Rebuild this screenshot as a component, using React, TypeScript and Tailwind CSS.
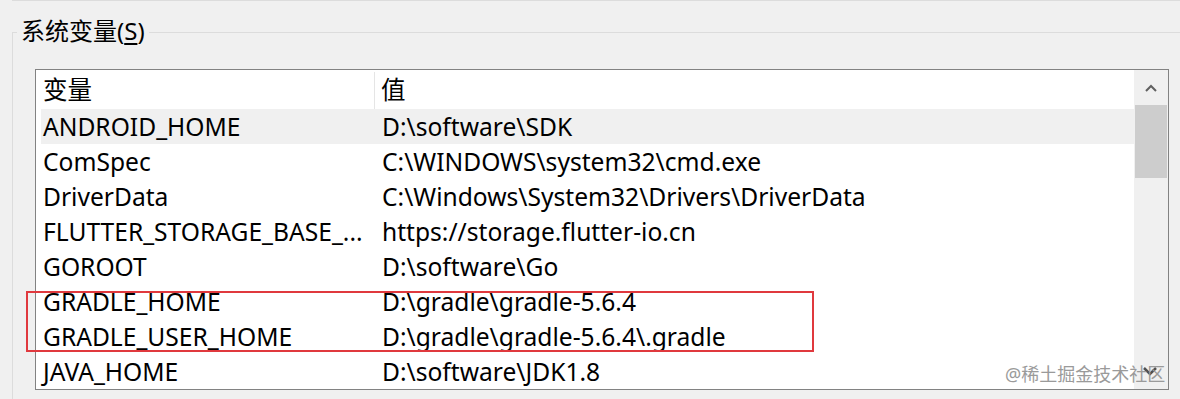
import React from "react";

const rows: [string, string][] = [
  ["ANDROID_HOME", "D:\\software\\SDK"],
  ["ComSpec", "C:\\WINDOWS\\system32\\cmd.exe"],
  ["DriverData", "C:\\Windows\\System32\\Drivers\\DriverData"],
  ["FLUTTER_STORAGE_BASE_...", "https://storage.flutter-io.cn"],
  ["GOROOT", "D:\\software\\Go"],
  ["GRADLE_HOME", "D:\\gradle\\gradle-5.6.4"],
  ["GRADLE_USER_HOME", "D:\\gradle\\gradle-5.6.4\\.gradle"],
  ["JAVA_HOME", "D:\\software\\JDK1.8"],
];

const font = { fontFamily: '"Noto Sans", "Noto Sans CJK SC", sans-serif' };

export default function App() {
  return (
    <div
      className="w-[1180px] h-[399px] bg-[#f0f0f0] overflow-hidden relative text-[#000]"
      style={font}
    >
      <div className="ml-[12px] h-[1px] bg-[#dcdcdc]" />
      <div className="relative ml-[12px] mt-[31px] border-l border-t border-[#dcdcdc] h-[400px]">
        <div className="absolute left-[4px] top-[-17px] bg-[#f0f0f0] px-[4px] text-[24px] leading-[30px]">
          系统变量(<span className="underline underline-offset-[3px] decoration-[1.5px]">S</span>)
        </div>
        <div className="ml-[22px] mt-[36px] w-[1134px] h-[321px] border border-[#828282] bg-white flex">
          <div className="flex-1 flex flex-col">
            <div className="flex h-[39px] items-center text-[24.5px] pt-[2px]">
              <div className="w-[339px] h-full border-r border-[#e5e5e5] pl-[7px] flex items-center">变量</div>
              <div className="pl-[6px]">值</div>
            </div>
            {rows.map(([k, v], i) => (
              <div
                key={k}
                className={
                  "flex h-[35px] items-center text-[24.6px] leading-[30px] " +
                  (i === 0 ? "bg-[#f0f0f0] ml-[5px]" : "ml-[5px]")
                }
              >
                <div className="w-[335px] pl-[2px] whitespace-nowrap">{k}</div>
                <div className="pl-[6px] whitespace-nowrap">{v}</div>
              </div>
            ))}
          </div>
          <div className="w-[34px] bg-[#f0f0f0] flex flex-col items-center">
            <div className="h-[35px] w-full flex items-center justify-center">
              <svg width="12" height="8" viewBox="0 0 12 8">
                <path d="M1 7 L6 2 L11 7" stroke="#606060" strokeWidth="2" fill="none" />
              </svg>
            </div>
            <div className="w-[32px] h-[73px] bg-[#cdcdcd]" />
          </div>
        </div>
      </div>
      <div className="absolute left-[26px] top-[291px] w-[788px] h-[61px] border-[2px] border-[#e0393e]" />
      <div className="absolute left-[1143px] top-[366px]">
        <svg width="14" height="10" viewBox="0 0 14 10">
          <path d="M1 2 L7 8 L13 2" stroke="#505050" strokeWidth="2.5" fill="none" />
        </svg>
      </div>
      <div className="absolute left-[1005px] top-[362px] text-[18px] leading-[24px] text-[#9a9a9a] whitespace-nowrap">
        @稀土掘金技术社区
      </div>
    </div>
  );
}
